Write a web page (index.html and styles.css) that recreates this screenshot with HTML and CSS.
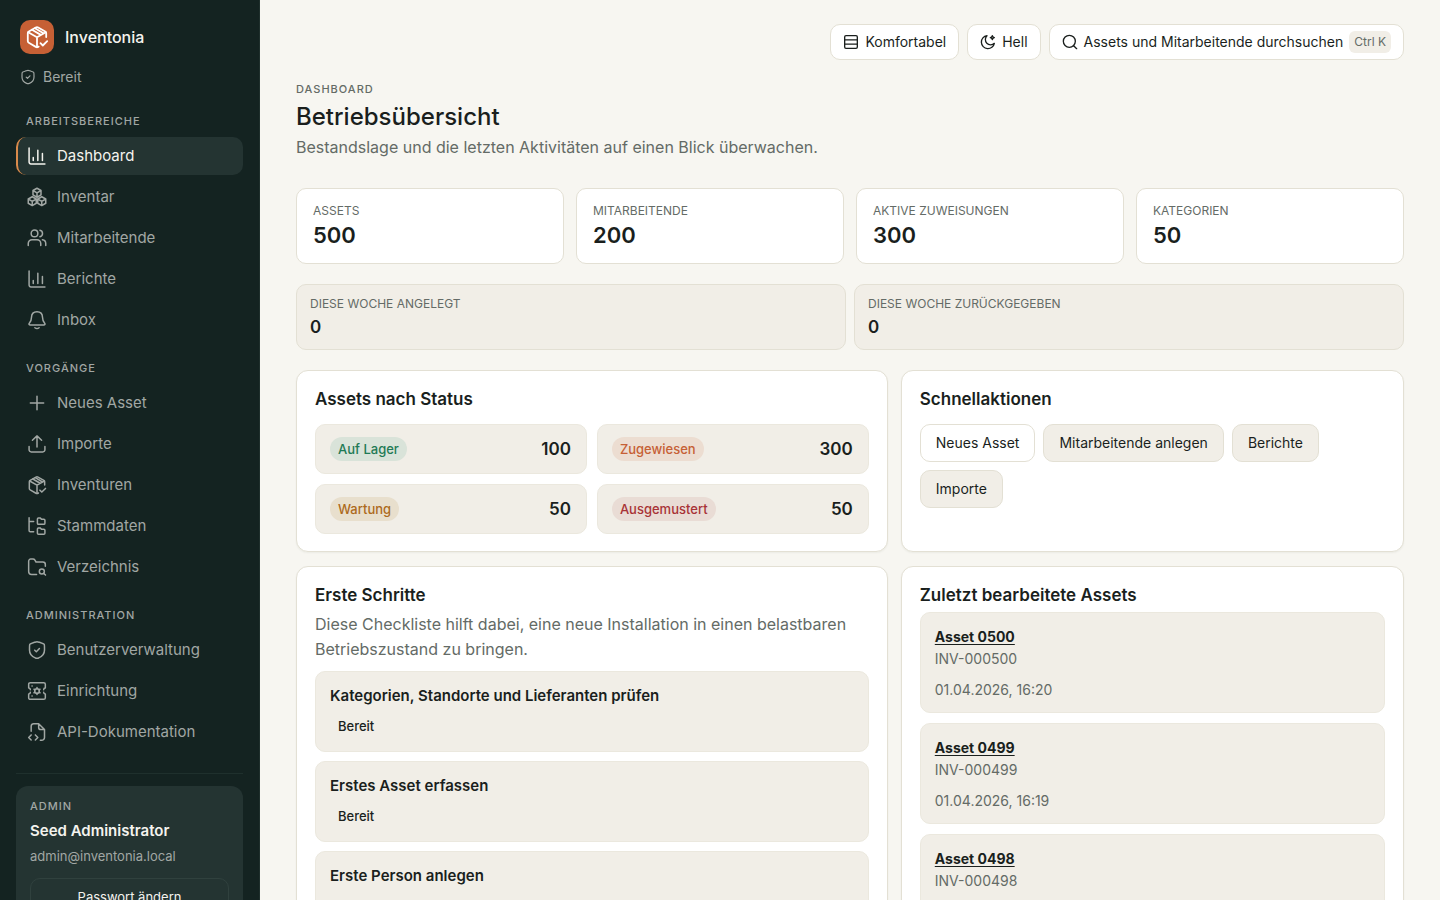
FILE: index.html
```html
<!DOCTYPE html>
<html lang="de">
<head>
<meta charset="utf-8">
<meta name="viewport" content="width=device-width, initial-scale=1">
<title>Inventonia – Betriebsübersicht</title>
<link rel="stylesheet" href="styles.css">
</head>
<body>
<svg class="sprite" aria-hidden="true">
  <symbol id="i-package" viewBox="0 0 24 24"><path d="M21.2 12V8.2a2 2 0 0 0-1-1.7l-7-4a2.400 2.400 0 0 0-2.400 0l-7 4a2 2 0 0 0-1 1.700v7.900a2 2 0 0 0 1 1.700l7 4.100a2.400 2.400 0 0 0 2.400 0l.5-.3"/><path d="m3.200 7.200 8.800 5 8.800-5M12 12.200V22M7 4.800l8.800 5.100M10 3.200l7.600 4.600M15.500 18.200l2.300 2.300 4.400-4.400"/></symbol>
  <symbol id="i-shield" viewBox="0 0 24 24"><path d="M3 10.400c0-3.200 0-4.800.4-5.300.4-.6 1.900-1.100 4.900-2.100l.6-.2C10.400 2.300 11.200 2 12 2s1.600.3 3.100.8l.6.2c3 1 4.500 1.500 4.900 2.100.4.500.4 2.100.4 5.300v1.600c0 5.600-4.200 8.400-6.900 9.500-.7.300-1.100.5-2.100.5s-1.400-.2-2.100-.5C7.200 20.400 3 17.600 3 12z"/><path d="m9.300 12.200 1.900 1.900 3.700-3.900"/></symbol>
  <symbol id="i-chart" viewBox="0 0 24 24"><path d="M2.500 2.500v16.800a2.200 2.200 0 0 0 2.200 2.200H21.500M7.500 17.500v-3.800M13 17.500V5M18.500 17.500V9"/></symbol>
  <symbol id="i-boxes" viewBox="0 0 24 24"><path d="m12 1.500 4.800 2.700v5.300L12 12.300 7.200 9.500V4.200zM7.200 4.200l4.800 2.900 4.800-2.900M12 7v5.200M6.300 11.700l4.800 2.700v5.100l-4.800 2.800-4.800-2.800v-5.100zM1.500 14.400l4.800 2.800 4.800-2.800M6.300 17.200v5.100M17.700 11.700l4.800 2.700v5.100l-4.800 2.800-4.800-2.800v-5.100zM12.900 14.400l4.800 2.800 4.800-2.800M17.700 17.200v5.100"/></symbol>
  <symbol id="i-users" viewBox="0 0 24 24"><circle cx="9" cy="6.500" r="4"/><path d="M1.500 21v-2.500a4.500 4.500 0 0 1 4.500-4.500h6a4.500 4.500 0 0 1 4.500 4.500V21M15.500 2.600a4 4 0 0 1 0 7.800M18.500 14.200a4.500 4.500 0 0 1 4 4.400V21"/></symbol>
  <symbol id="i-bell" viewBox="0 0 24 24"><path d="M3 15.600c2-2.100 2.300-4.200 2.400-7C5.500 4.700 8 2 12 2s6.500 2.700 6.600 6.600c.1 2.800.4 4.900 2.400 7 1.100 1.200.6 2.400-1 2.400H4c-1.600 0-2.100-1.200-1-2.400zM9.500 21.300c1.400 1.100 3.600 1.100 5 0"/></symbol>
  <symbol id="i-plus" viewBox="0 0 24 24"><path d="M12 4v16M4 12h16"/></symbol>
  <symbol id="i-upload" viewBox="0 0 24 24"><path d="M2.500 15v4a2.500 2.500 0 0 0 2.500 2.500h14a2.500 2.500 0 0 0 2.500-2.500v-4M12 15.500V2.500M6.500 7.500 12 2.300l5.500 5.200"/></symbol>
  <symbol id="i-tree" viewBox="0 0 24 24"><path d="M2.500 2v15.500a1.500 1.500 0 0 0 1.500 1.500h4M2.500 6.500H8M12.500 3.500c0-.7.500-1.200 1.200-1.200h2l1.600 1.500h2.900c.8 0 1.300.5 1.300 1.300v3.500c0 .8-.5 1.300-1.300 1.300h-6.400c-.8 0-1.300-.5-1.300-1.300zM12.500 15.500c0-.7.500-1.200 1.200-1.200h2l1.600 1.500h2.900c.8 0 1.300.5 1.300 1.300v3.500c0 .8-.5 1.300-1.300 1.300h-6.400c-.8 0-1.300-.5-1.300-1.300z"/></symbol>
  <symbol id="i-folder" viewBox="0 0 24 24"><path d="M11.500 21H5.500A3.500 3.500 0 0 1 2 17.500V5a2.500 2.500 0 0 1 2.500-2.500h2.700c1.200 0 1.800.5 2.300 1.300L10.800 6H19a3 3 0 0 1 3 3v2"/><circle cx="17.800" cy="17.300" r="3"/><path d="m20.200 19.700 2 2"/></symbol>
  <symbol id="i-setup" viewBox="0 0 24 24"><path d="M4 2h16a2 2 0 0 1 2 2v4.500a2 2 0 0 0-2 2M20 13.500a2 2 0 0 0 2 2V20a2 2 0 0 1-2 2H4a2 2 0 0 1-2-2v-4.500a2 2 0 0 0 2-2M4 10.500a2 2 0 0 0-2-2V4a2 2 0 0 1 2-2M6 6h.2M6 18h.2"/><circle cx="12" cy="12" r="2.800"/><path d="M12 7.800v1.400M12 14.800v1.400M8.400 9.900l1.200.7M14.400 13.400l1.200.7M8.400 14.100l1.200-.7M14.400 10.600l1.200-.7"/></symbol>
  <symbol id="i-filecode" viewBox="0 0 24 24"><path d="M5 11V5a3 3 0 0 1 3-3h6l7 7v9.500a3.500 3.500 0 0 1-3.500 3.500H16M14 2v4.500A2.500 2.500 0 0 0 16.500 9H21M5 15.500l-3 3 3 3M10 15.500l3 3-3 3"/></symbol>
  <symbol id="i-rows" viewBox="0 0 24 24"><rect x="2.500" y="2.500" width="19" height="19" rx="2"/><path d="M2.500 8.800h19M2.500 15.200h19"/></symbol>
  <symbol id="i-moon" viewBox="0 0 24 24"><path d="M10.500 2.500A9.800 9.800 0 1 0 21.500 14 7.500 7.500 0 0 1 10.500 2.500z"/><path d="M18.500 2.500c.4 2 1 2.600 3 3-2 .4-2.600 1-3 3-.4-2-1-2.600-3-3 2-.4 2.600-1 3-3z"/></symbol>
  <symbol id="i-search" viewBox="0 0 24 24"><circle cx="11" cy="11" r="9"/><path d="m17.500 17.500 4.500 4.500"/></symbol>
</svg>
<div class="app">
  <aside class="sidebar">
    <div class="brand">
      <span class="brand-mark"><svg class="icon icon-logo"><use href="#i-package"/></svg></span>
      <span class="brand-name">Inventonia</span>
    </div>
    <p class="status"><svg class="icon icon-sm"><use href="#i-shield"/></svg>Bereit</p>
    <nav class="nav">
      <section class="nav-group">
        <h2 class="nav-label">Arbeitsbereiche</h2>
        <a class="nav-item active" href="#" aria-current="page"><svg class="icon"><use href="#i-chart"/></svg>Dashboard</a>
        <a class="nav-item" href="#"><svg class="icon"><use href="#i-boxes"/></svg>Inventar</a>
        <a class="nav-item" href="#"><svg class="icon"><use href="#i-users"/></svg>Mitarbeitende</a>
        <a class="nav-item" href="#"><svg class="icon"><use href="#i-chart"/></svg>Berichte</a>
        <a class="nav-item" href="#"><svg class="icon"><use href="#i-bell"/></svg>Inbox</a>
      </section>
      <section class="nav-group">
        <h2 class="nav-label">Vorgänge</h2>
        <a class="nav-item" href="#"><svg class="icon"><use href="#i-plus"/></svg>Neues Asset</a>
        <a class="nav-item" href="#"><svg class="icon"><use href="#i-upload"/></svg>Importe</a>
        <a class="nav-item" href="#"><svg class="icon"><use href="#i-package"/></svg>Inventuren</a>
        <a class="nav-item" href="#"><svg class="icon"><use href="#i-tree"/></svg>Stammdaten</a>
        <a class="nav-item" href="#"><svg class="icon"><use href="#i-folder"/></svg>Verzeichnis</a>
      </section>
      <section class="nav-group">
        <h2 class="nav-label">Administration</h2>
        <a class="nav-item" href="#"><svg class="icon"><use href="#i-shield"/></svg>Benutzerverwaltung</a>
        <a class="nav-item" href="#"><svg class="icon"><use href="#i-setup"/></svg>Einrichtung</a>
        <a class="nav-item" href="#"><svg class="icon"><use href="#i-filecode"/></svg>API-Dokumentation</a>
      </section>
    </nav>
    <footer class="account">
      <div class="account-card">
        <span class="account-role">Admin</span>
        <strong class="account-name">Seed Administrator</strong>
        <span class="account-mail">admin@inventonia.local</span>
        <button class="account-button" type="button">Passwort ändern</button>
      </div>
    </footer>
  </aside>
  <main class="main">
    <div class="toolbar">
      <button class="tool" type="button"><svg class="icon icon-md"><use href="#i-rows"/></svg>Komfortabel</button>
      <button class="tool" type="button"><svg class="icon icon-md"><use href="#i-moon"/></svg>Hell</button>
      <button class="tool" type="button"><svg class="icon icon-md"><use href="#i-search"/></svg>Assets und Mitarbeitende durchsuchen<kbd class="kbd">Ctrl K</kbd></button>
    </div>
    <header class="page-head">
      <p class="eyebrow">Dashboard</p>
      <h1 class="title">Betriebsübersicht</h1>
      <p class="lead">Bestandslage und die letzten Aktivitäten auf einen Blick überwachen.</p>
    </header>
    <section class="stats">
      <article class="stat"><span class="stat-label">Assets</span><strong class="stat-value">500</strong></article>
      <article class="stat"><span class="stat-label">Mitarbeitende</span><strong class="stat-value">200</strong></article>
      <article class="stat"><span class="stat-label">Aktive Zuweisungen</span><strong class="stat-value">300</strong></article>
      <article class="stat"><span class="stat-label">Kategorien</span><strong class="stat-value">50</strong></article>
    </section>
    <section class="weekly">
      <article class="week"><span class="week-label">Diese Woche angelegt</span><strong class="week-value">0</strong></article>
      <article class="week"><span class="week-label">Diese Woche zurückgegeben</span><strong class="week-value">0</strong></article>
    </section>
    <div class="panels">
      <section class="panel">
        <h2 class="panel-title spaced">Assets nach Status</h2>
        <div class="tiles">
          <div class="tile"><span class="badge green">Auf Lager</span><strong class="tile-value">100</strong></div>
          <div class="tile"><span class="badge orange">Zugewiesen</span><strong class="tile-value">300</strong></div>
          <div class="tile"><span class="badge amber">Wartung</span><strong class="tile-value">50</strong></div>
          <div class="tile"><span class="badge red">Ausgemustert</span><strong class="tile-value">50</strong></div>
        </div>
      </section>
      <section class="panel">
        <h2 class="panel-title spaced">Schnellaktionen</h2>
        <div class="actions">
          <a class="action primary" href="#">Neues Asset</a>
          <a class="action" href="#">Mitarbeitende anlegen</a>
          <a class="action" href="#">Berichte</a>
          <a class="action" href="#">Importe</a>
        </div>
      </section>
      <section class="panel">
        <h2 class="panel-title">Erste Schritte</h2>
        <p class="panel-text">Diese Checkliste hilft dabei, eine neue Installation in einen belastbaren Betriebszustand zu bringen.</p>
        <ul class="list steps">
          <li class="entry step"><strong class="step-title">Kategorien, Standorte und Lieferanten prüfen</strong><span class="badge plain">Bereit</span></li>
          <li class="entry step"><strong class="step-title">Erstes Asset erfassen</strong><span class="badge plain">Bereit</span></li>
          <li class="entry step"><strong class="step-title">Erste Person anlegen</strong><span class="badge plain">Bereit</span></li>
        </ul>
      </section>
      <section class="panel">
        <h2 class="panel-title">Zuletzt bearbeitete Assets</h2>
        <ul class="list">
          <li class="entry asset"><a class="asset-link" href="#">Asset 0500</a><span class="asset-meta">INV-000500</span><time class="asset-meta asset-time">01.04.2026, 16:20</time></li>
          <li class="entry asset"><a class="asset-link" href="#">Asset 0499</a><span class="asset-meta">INV-000499</span><time class="asset-meta asset-time">01.04.2026, 16:19</time></li>
          <li class="entry asset"><a class="asset-link" href="#">Asset 0498</a><span class="asset-meta">INV-000498</span><time class="asset-meta asset-time">01.04.2026, 16:18</time></li>
        </ul>
      </section>
    </div>
  </main>
</div>
</body>
</html>
```
FILE: styles.css
```css
:root {
  --ink: #1a1f1d;
  --muted: #646b66;
  --page: #f7f6f1;
  --surface: #ffffff;
  --soft: #f1eee7;
  --line: #e3e0d4;
  --soft-line: #ebe8de;
  --side: #142321;
  --side-raised: #243432;
  --side-text: #a1a7a4;
  --side-strong: #f4f3ee;
  --accent: #c66035;
}

* {
  box-sizing: border-box;
}

body {
  margin: 0;
  background: var(--page);
  color: var(--ink);
  font-family: Inter, "Noto Sans", sans-serif;
  font-size: 14px;
  line-height: 20px;
}

h1, h2, p, ul {
  margin: 0;
  padding: 0;
}

a {
  color: inherit;
  text-decoration: none;
}

button {
  font: inherit;
  color: inherit;
  cursor: pointer;
}

.sprite {
  display: none;
}

.icon {
  width: 20px;
  height: 20px;
  flex: none;
  fill: none;
  stroke: currentColor;
  stroke-width: 1.8;
  stroke-linecap: round;
  stroke-linejoin: round;
}

.icon-sm {
  width: 16px;
  height: 16px;
}

.icon-md {
  width: 16px;
  height: 16px;
  stroke-width: 2;
}

.icon-logo {
  width: 24px;
  height: 24px;
}

.app {
  display: grid;
  grid-template-columns: 260px minmax(0, 1fr);
  height: 100vh;
}

.sidebar,
.main {
  overflow-y: auto;
  scrollbar-width: none;
}

.sidebar {
  padding: 20px 16px 16px;
  border-right: 1px solid #1f2f2c;
  background: var(--side);
  color: var(--side-text);
}

.brand {
  display: flex;
  align-items: center;
  gap: 11px;
  padding-left: 4px;
}

.brand-mark {
  display: grid;
  place-items: center;
  width: 34px;
  height: 34px;
  border-radius: 10px;
  background: var(--accent);
  color: #ffffff;
}

.brand-name {
  color: var(--side-strong);
  font-size: 16px;
  font-weight: 500;
}

.status {
  display: flex;
  align-items: center;
  gap: 7px;
  margin-top: 13px;
  padding-left: 4px;
}

.nav {
  display: grid;
  gap: 21px;
  margin-top: 26px;
}

.nav-group {
  display: grid;
  gap: 3px;
}

.nav-label {
  margin-bottom: 4px;
  padding-left: 10px;
  font-size: 11px;
  font-weight: 500;
  line-height: 17px;
  letter-spacing: 1px;
  text-transform: uppercase;
}

.nav-item {
  display: flex;
  align-items: center;
  gap: 10px;
  height: 38px;
  padding: 0 9px;
  border-left: 2px solid transparent;
  border-radius: 10px;
  font-size: 15px;
}

.nav-item.active {
  border-left-color: #d98a4b;
  background: var(--side-raised);
  color: var(--side-strong);
}

.account {
  margin-top: 22px;
  padding-top: 12px;
  border-top: 1px solid #1f302d;
}

.account-card {
  display: grid;
  padding: 12px 14px;
  border-radius: 12px;
  background: var(--side-raised);
}

.account-role {
  font-size: 11px;
  font-weight: 500;
  line-height: 17px;
  letter-spacing: 1px;
  text-transform: uppercase;
}

.account-name {
  margin-top: 5px;
  color: var(--side-strong);
  font-size: 15px;
  font-weight: 600;
  line-height: 22px;
}

.account-mail {
  margin-top: 4px;
  font-size: 13px;
  line-height: 20px;
}

.account-button {
  height: 38px;
  margin-top: 12px;
  border: 1px solid #30413e;
  border-radius: 10px;
  background: transparent;
  color: var(--side-strong);
  font-size: 13px;
}

.main {
  padding: 24px 36px;
}

.toolbar {
  display: flex;
  justify-content: flex-end;
  gap: 8px;
}

.tool {
  display: flex;
  align-items: center;
  gap: 6px;
  height: 36px;
  padding: 0 12px;
  border: 1px solid var(--line);
  border-radius: 10px;
  background: var(--surface);
  font-size: 14px;
  white-space: nowrap;
}

.kbd {
  padding: 0 5px;
  border-radius: 6px;
  background: var(--soft);
  color: var(--muted);
  font-family: inherit;
  font-size: 12px;
  line-height: 22px;
}

.page-head {
  margin-top: 21px;
}

.eyebrow {
  color: var(--muted);
  font-size: 11px;
  font-weight: 500;
  line-height: 17px;
  letter-spacing: 1px;
  text-transform: uppercase;
}

.title {
  margin-top: 4px;
  font-size: 24px;
  font-weight: 500;
  line-height: 30px;
}

.lead,
.panel-text {
  color: var(--muted);
  font-size: 16px;
  line-height: 25px;
}

.lead {
  margin-top: 3px;
}

.stats {
  display: grid;
  grid-template-columns: repeat(4, minmax(0, 1fr));
  gap: 12px;
  margin-top: 28px;
}

.stat {
  display: grid;
  padding: 13px 16px;
  border: 1px solid var(--line);
  border-radius: 10px;
  background: var(--surface);
}

.stat-label,
.week-label {
  color: var(--muted);
  font-size: 12px;
  line-height: 18px;
  text-transform: uppercase;
}

.stat-value {
  font-size: 22px;
  font-weight: 600;
  line-height: 30px;
}

.weekly {
  display: grid;
  grid-template-columns: repeat(2, minmax(0, 1fr));
  gap: 8px;
  margin-top: 20px;
}

.week {
  display: grid;
  gap: 2px;
  padding: 10px 13px;
  border: 1px solid var(--line);
  border-radius: 10px;
  background: var(--soft);
}

.week-value,
.tile-value {
  font-size: 17px;
  font-weight: 600;
  line-height: 24px;
}

.panels {
  display: grid;
  grid-template-columns: minmax(0, 588fr) minmax(0, 500fr);
  gap: 14px 13px;
  margin-top: 20px;
}

.panel {
  padding: 19px 18px 17px;
  border: 1px solid var(--line);
  border-radius: 12px;
  background: var(--surface);
  box-shadow: 0 1px 2px rgba(26, 31, 29, 0.05);
}

.panel-title {
  margin-bottom: 7px;
  font-size: 17px;
  font-weight: 600;
  line-height: 19px;
}

.panel-title.spaced {
  margin-bottom: 15px;
}

.tiles {
  display: grid;
  grid-template-columns: repeat(2, minmax(0, 1fr));
  gap: 10px;
}

.tile {
  display: flex;
  align-items: center;
  justify-content: space-between;
  height: 50px;
  padding: 0 15px 0 14px;
  border: 1px solid var(--soft-line);
  border-radius: 10px;
  background: var(--soft);
}

.badge {
  padding: 0 8px;
  border-radius: 12px;
  font-size: 13px;
  font-weight: 500;
  line-height: 24px;
}

.green {
  background: #d9e3d9;
  color: #1f7a55;
}

.orange {
  background: #ecddd1;
  color: #c66035;
}

.amber {
  background: #e8dfcd;
  color: #ad6a1c;
}

.red {
  background: #e9dcd5;
  color: #a83236;
}

.actions {
  display: flex;
  flex-wrap: wrap;
  gap: 8px;
}

.action {
  padding: 8px 15px;
  border: 1px solid var(--line);
  border-radius: 10px;
  background: var(--soft);
  line-height: 20px;
}

.action.primary {
  background: var(--surface);
}

.list {
  display: grid;
  gap: 10px;
  list-style: none;
}

.steps {
  gap: 9px;
  margin-top: 9px;
}

.entry {
  display: grid;
  justify-items: start;
  border: 1px solid var(--soft-line);
  border-radius: 10px;
  background: var(--soft);
}

.step {
  gap: 7px;
  padding: 12px 14px 13px;
}

.step-title {
  font-size: 15px;
  font-weight: 600;
  line-height: 23px;
}

.asset {
  padding: 13px 14px 11px;
}

.asset-link {
  font-weight: 700;
  line-height: 22px;
  text-decoration: underline;
  text-underline-offset: 2px;
}

.asset-meta {
  color: var(--muted);
  line-height: 22px;
}

.asset-time {
  margin-top: 9px;
}
```
